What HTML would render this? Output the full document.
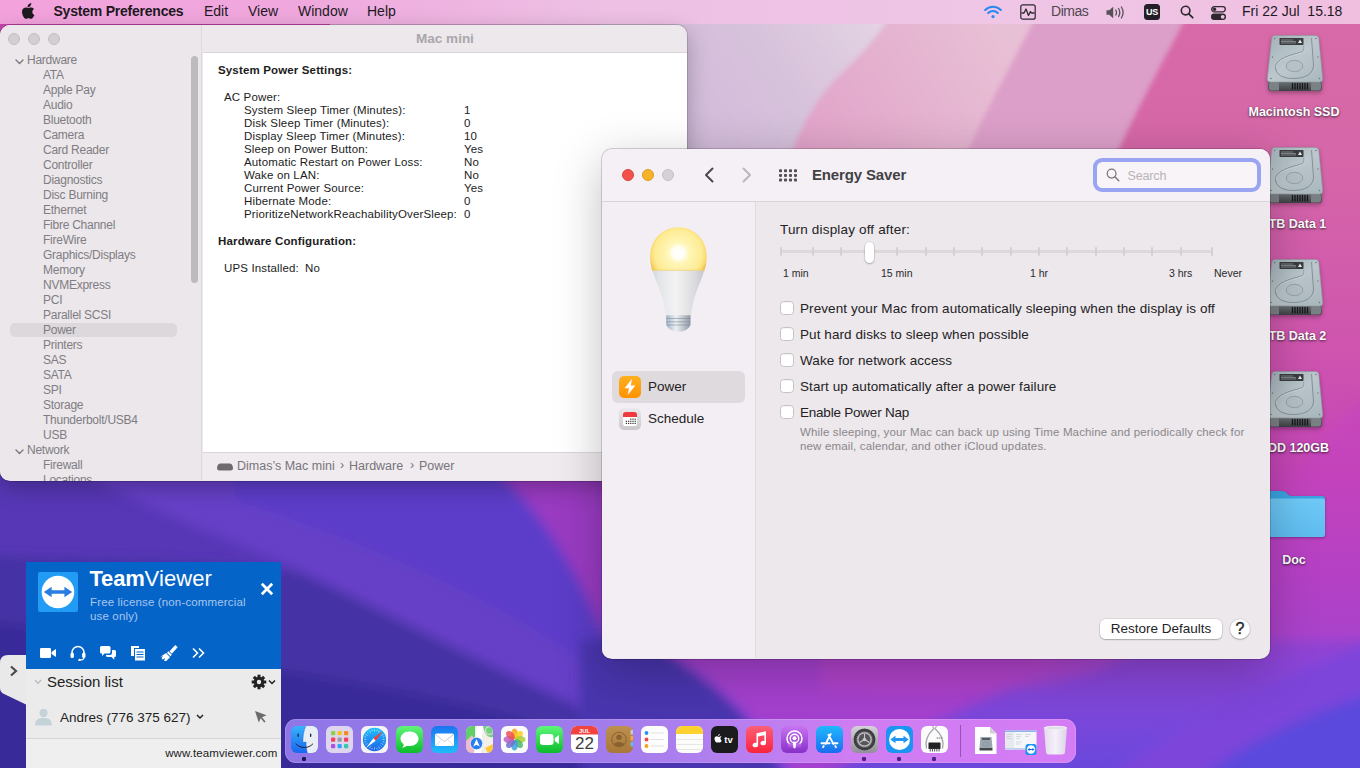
<!DOCTYPE html>
<html><head><meta charset="utf-8"><title>Desktop</title>
<style>
*{box-sizing:border-box;margin:0;padding:0}
html,body{width:1360px;height:768px;overflow:hidden;background:#5a38b8}
body{position:relative;font-family:"Liberation Sans",sans-serif;color:#222;-webkit-font-smoothing:antialiased}
.abs{position:absolute}
#wall{position:absolute;left:0;top:0;width:1360px;height:768px}
/* menubar */
#menubar{position:absolute;left:0;top:0;width:1360px;height:24px;background:linear-gradient(90deg,#f3a2dc 0,#efa8dd 300px,#edc0e4 600px,#efc6e6 1000px,#f0bfe0 1360px);font-size:14px;color:#1d1a1f}
#menubar span{position:absolute;top:3px;white-space:nowrap;line-height:17px}
/* Mac mini window */
#sysinfo{position:absolute;left:0;top:25px;width:687px;height:455.5px;background:#ece8ec;border-radius:10px 10px 10px 10px;overflow:hidden;box-shadow:0 7px 22px rgba(0,0,0,.26),0 0 0 .7px rgba(0,0,0,.2)}
#sysinfo .tl{position:absolute;top:8px;width:12px;height:12px;border-radius:50%;background:#d3cfd3;border:1px solid #c2bec2}
#si-side{position:absolute;left:0;top:0;width:202px;height:455px;background:#ebe7eb;border-right:1px solid #dcd8dc}
#si-side div.it{position:absolute;left:43px;font-size:12px;color:#807d82;white-space:nowrap;line-height:15px;letter-spacing:-.25px;margin-top:1px}
#si-title{position:absolute;left:203px;top:0;width:484px;height:28px;background:#ece8ec;border-bottom:1px solid #d9d5d9;text-align:center;font-weight:bold;font-size:13.5px;color:#a9a6aa;line-height:27px}
#si-content{position:absolute;left:203px;top:28px;width:484px;height:399px;background:#fff}
#si-content div{position:absolute;font-size:11.5px;color:#1c1c1c;white-space:nowrap;line-height:13px;letter-spacing:.15px}
#si-path{position:absolute;left:203px;top:427px;width:484px;height:28px;background:#efebef;border-top:1px solid #dad6da;font-size:12.5px;color:#77747a}
/* Energy saver */
#energy{position:absolute;left:602px;top:149px;width:668px;height:509.5px;background:#ece8ec;border-radius:10px;overflow:hidden;box-shadow:0 12px 48px rgba(0,0,0,.25),0 0 0 .7px rgba(0,0,0,.22)}
#en-bar{position:absolute;left:0;top:0;width:668px;height:53px;background:#f5f0f5;border-bottom:1px solid #d8d4d8}
#en-side{position:absolute;left:0;top:53px;width:154px;height:456px;background:#f3eef3;border-right:1px solid #dedade}
.cb{position:absolute;left:179px;width:14px;height:14px;border-radius:3.5px;background:#fff;border:1px solid #c6c2c6;box-shadow:inset 0 1px 1px rgba(0,0,0,.05);margin-left:-.3px;margin-top:.3px}
.cbl{position:absolute;left:198px;font-size:13.5px;color:#242224;white-space:nowrap;line-height:16px;letter-spacing:.08px;margin-top:.8px}
/* teamviewer */
#tv{position:absolute;left:26px;top:563px;width:255px;height:205px;background:#ebebeb}
#tv::before{content:"";position:absolute;left:0;top:-1px;width:255px;height:1px;background:#0564c8}
#tv-head{position:absolute;left:0;top:0;width:255px;height:106px;background:#0564c8}
/* dock */
#dock{position:absolute;left:284.5px;top:719px;width:791.5px;height:44px;border-radius:11px;background:linear-gradient(90deg,#8f76e6 0,#987aea 30%,#ae7fee 52%,#cf7cf2 72%,#d47cf4 100%);box-shadow:inset 0 0 0 .8px rgba(255,255,255,.2)}
.di{position:absolute;top:6px;width:28px;height:28px;border-radius:7px}
.dlabel{position:absolute;width:140px;text-align:center;color:#fff;font-weight:bold;font-size:12.5px;text-shadow:0 1px 2.5px rgba(0,0,0,.65),0 0 1px rgba(0,0,0,.25);white-space:nowrap;margin-top:1px}
</style></head><body>
<svg id="wall" viewBox="0 0 1360 768">
<defs>
<filter id="b6" x="-10%" y="-10%" width="120%" height="120%"><feGaussianBlur stdDeviation="6"/></filter>
<filter id="b3" x="-10%" y="-10%" width="120%" height="120%"><feGaussianBlur stdDeviation="2.5"/></filter>
<filter id="b20" x="-20%" y="-20%" width="140%" height="140%"><feGaussianBlur stdDeviation="20"/></filter>
<linearGradient id="gR" x1="0" y1="0" x2="0" y2="1">
<stop offset="0" stop-color="#d86aa8"/><stop offset=".2" stop-color="#d667a8"/><stop offset=".45" stop-color="#cf55ae"/><stop offset=".62" stop-color="#c444b8"/><stop offset=".75" stop-color="#a840c8"/><stop offset=".87" stop-color="#8a45d8"/><stop offset="1" stop-color="#6a48dc"/>
</linearGradient>
<linearGradient id="gA" gradientUnits="userSpaceOnUse" x1="700" y1="150" x2="880" y2="30"><stop offset="0" stop-color="#d1bad9"/><stop offset=".55" stop-color="#d8c3dc"/><stop offset="1" stop-color="#e3d2e3"/></linearGradient><linearGradient id="gB" gradientUnits="userSpaceOnUse" x1="800" y1="150" x2="1000" y2="30"><stop offset="0" stop-color="#e1a2c9"/><stop offset=".5" stop-color="#e4b1cf"/><stop offset="1" stop-color="#e8c0d5"/></linearGradient>
</defs>
<!-- base bottom purple -->
<rect width="1360" height="768" fill="#5737b6"/>
<!-- right/top pink field -->
<rect x="600" y="0" width="760" height="768" fill="url(#gR)"/>
<rect x="0" y="0" width="700" height="40" fill="#c845ae"/>
<rect x="330" y="0" width="370" height="40" fill="#d9a6d4"/>
<!-- top bands -->
<g filter="url(#b3)">
<path d="M600,0 H900 C885,30 862,55 840,75 C815,100 800,130 785,170 H600Z" fill="url(#gA)"/>
<path d="M900,0 H1045 C1020,50 990,100 960,170 H785 C800,130 815,100 840,75 C862,55 885,30 900,0Z" fill="url(#gB)"/>
<path d="M1045,0 H1195 C1170,50 1140,100 1110,170 H960 C990,100 1020,50 1045,0Z" fill="#dc9fc9"/>
</g>
<path d="M1380,385 C1330,420 1290,470 1262,560 L1262,640 H1380Z" fill="#c443c2" opacity=".45" filter="url(#b6)"/>
<!-- bottom left shapes -->
<g filter="url(#b6)">
<path d="M75,470 H520 C560,520 600,600 640,700 L640,790 H600 C500,700 400,625 300,571 C230,540 140,505 75,470Z" fill="#6640c7"/>
<path d="M235,470 H520 L640,600 V700 C560,640 450,570 235,500Z" fill="#5c3ec9"/>
<path d="M-20,555 C80,562 200,556 300,573 C360,597 430,640 600,716 L640,736 V790 H-20Z" fill="#4531a4"/>
<path d="M-20,620 C100,640 250,665 400,692 C480,708 560,728 640,762 V790 H-20Z" fill="#392998"/>
<path d="M495,470 C540,510 578,570 606,640 V470Z" fill="#9a3ac2"/>
</g>
<!-- bottom right -->
<g filter="url(#b6)">
<path d="M580,640 H650 C700,680 750,700 790,790 H580Z" fill="#4a35ae"/>
<path d="M650,640 H1100 C1000,700 900,730 800,790 C760,720 720,680 650,640Z" fill="#a43fce"/>
<path d="M820,640 H1150 C1100,685 1000,700 820,690Z" fill="#b845c8" opacity=".6"/>
<path d="M1090,790 C1170,725 1290,675 1380,640 V790Z" fill="#7d45da"/>
<path d="M1185,790 C1240,745 1310,712 1380,692 V790Z" fill="#5a48dc"/>
</g>
</svg>

<!--desk-->
<svg width="0" height="0" style="position:absolute"><defs>
<linearGradient id="hd1" x1="0" y1="0" x2="1" y2="1"><stop offset="0" stop-color="#a3b1b8"/><stop offset=".5" stop-color="#bcc8cd"/><stop offset="1" stop-color="#a9b6bd"/></linearGradient>
<linearGradient id="hd2" x1="0" y1="0" x2="0" y2="1"><stop offset="0" stop-color="#6d7376"/><stop offset="1" stop-color="#3e4144"/></linearGradient>
<symbol id="hdd" viewBox="0 0 58 60">
<path d="M2,47 H56 V53.500 Q56,57 52.500,57 H5.500 Q2,57 2,53.500Z" fill="url(#hd2)"/>
<path d="M3,51 Q3,47.500 7,47.500 H12 Q13,47.500 13,51 V56.500 H5 Q3,56 3,54Z M45,51 Q45,47.500 46,47.500 H51 Q55,47.500 55,51 V54 Q55,56 53,56.500 H45Z" fill="#7b8185"/>
<path d="M26.500,49 V55.500 M29,49 V55.500 M31.500,49 V55.500 M34,49 V55.500 M36.500,49 V55.500 M39,49 V55.500 M41.500,49 V55.500" stroke="#15171a" stroke-width="1.300"/>
<path d="M9,1.500 H49.500 Q52.500,1.500 52.800,4.500 L56.700,44.500 Q57,48 53.500,48 H4.500 Q1,48 1.300,44.500 L5.700,4.500 Q6,1.500 9,1.500Z" fill="url(#hd1)" stroke="#8d999f" stroke-width=".6"/>
<rect x="13.500" y="4" width="24" height="7" rx=".8" fill="#3a3d40"/><path d="M15,6 H27 M15,7.500 H30 M15,9 H30" stroke="#9ea4a8" stroke-width=".7"/><path d="M34,5.500 L36,9 H32Z" fill="#e8eaec"/>
<path d="M38,11.500 V14 C38,17 36,18 32,19 C18,22.500 9.500,27 9.500,33.500 C9.500,40.500 17,44.500 27,44.500 C40,44.500 47.500,39.500 47.500,31 L45.500,4" fill="none" stroke="#869299" stroke-width="1"/>
<path d="M38.800,11.500 V14 C38.800,17.500 37,18.800 33,19.800 C19,23.300 10.300,27.500 10.300,33.500" fill="none" stroke="#d4dde1" stroke-width=".6"/>
<ellipse cx="28.500" cy="32" rx="8.300" ry="5.700" fill="#b5c1c7" stroke="#8b979d" stroke-width=".8"/>
<circle cx="8.500" cy="4.500" r=".8" fill="#6f7a80"/><circle cx="50" cy="4.500" r=".8" fill="#6f7a80"/><circle cx="5" cy="44.500" r=".8" fill="#6f7a80"/><circle cx="53.500" cy="44.500" r=".8" fill="#6f7a80"/><circle cx="6.500" cy="23" r=".7" fill="#6f7a80"/><circle cx="52" cy="23" r=".7" fill="#6f7a80"/>
</symbol></defs></svg>
<svg class="abs" style="left:1265.5px;top:34px;filter:drop-shadow(0 2px 2px rgba(0,0,0,.3))" width="58" height="60"><use href="#hdd"/></svg>
<div class="dlabel" style="left:1224px;top:104px;line-height:15px">Macintosh SSD</div>
<svg class="abs" style="left:1265.5px;top:146px;filter:drop-shadow(0 2px 2px rgba(0,0,0,.3))" width="58" height="60"><use href="#hdd"/></svg>
<div class="dlabel" style="left:1224px;top:216px;line-height:15px">1TB Data 1</div>
<svg class="abs" style="left:1265.5px;top:258px;filter:drop-shadow(0 2px 2px rgba(0,0,0,.3))" width="58" height="60"><use href="#hdd"/></svg>
<div class="dlabel" style="left:1224px;top:328px;line-height:15px">1TB Data 2</div>
<svg class="abs" style="left:1265.5px;top:370px;filter:drop-shadow(0 2px 2px rgba(0,0,0,.3))" width="58" height="60"><use href="#hdd"/></svg>
<div class="dlabel" style="left:1224px;top:440px;line-height:15px">HDD 120GB</div>
<svg class="abs" style="left:1262px;top:488px;filter:drop-shadow(0 1px 1.500px rgba(0,0,0,.3))" width="64" height="52" viewBox="0 0 64 52"><defs><linearGradient id="fd1" x1="0" y1="0" x2="0" y2="1"><stop offset="0" stop-color="#6fc9f7"/><stop offset="1" stop-color="#5fbdf0"/></linearGradient></defs><path d="M1,6 Q1,3 4,3 H20 Q22.500,3 24,4.500 L26,6.500 Q27.500,8 30,8 H60 Q63,8 63,11 V46 Q63,49 60,49 H4 Q1,49 1,46Z" fill="#3aa4e2"/><path d="M1,13 Q1,10.500 3.500,10.500 H60.500 Q63,10.500 63,13 V46 Q63,49 60,49 H4 Q1,49 1,46Z" fill="url(#fd1)"/></svg>
<div class="dlabel" style="left:1224px;top:552px;line-height:15px">Doc</div>
<!--/desk-->
<div id="menubar">
<svg class="abs" style="left:19.500px;top:2.500px" width="15" height="17" viewBox="0 0 15 17"><path d="M10.300,3 C11,2.100 11.400,1 11.300,0 C10.300,.1 9.200,.7 8.500,1.500 C7.900,2.200 7.400,3.300 7.500,4.300 C8.600,4.400 9.600,3.800 10.300,3Z M12.300,8.900 C12.300,6.900 13.900,6 14,5.900 C13.100,4.600 11.700,4.400 11.200,4.400 C10,4.300 8.900,5.100 8.300,5.100 C7.700,5.100 6.800,4.400 5.800,4.400 C4.500,4.400 3.300,5.200 2.600,6.300 C1.300,8.600 2.300,12 3.600,13.900 C4.200,14.800 5,15.800 6,15.800 C7,15.800 7.300,15.200 8.500,15.200 C9.700,15.200 10,15.800 11,15.800 C12,15.800 12.700,14.900 13.300,14 C14,13 14.300,12 14.300,11.900 C14.300,11.900 12.300,11.100 12.300,8.900Z" fill="#1d1a1f"/></svg>
<svg class="abs" style="left:983.500px;top:4.500px" width="18" height="14" viewBox="0 0 18 14"><path d="M1.200,5 A11,11 0 0 1 16.800,5" fill="none" stroke="#2889f2" stroke-width="2.100" stroke-linecap="round"/><path d="M4.200,8 A6.800,6.800 0 0 1 13.800,8" fill="none" stroke="#2889f2" stroke-width="2.100" stroke-linecap="round"/><circle cx="9" cy="11.600" r="1.600" fill="#2889f2"/></svg>
<svg class="abs" style="left:1019.500px;top:3.500px" width="16" height="16" viewBox="0 0 16 16"><rect x=".8" y=".8" width="14.400" height="14.400" rx="2" fill="none" stroke="#2c282e" stroke-width="1.200"/><path d="M1.500,9 H4 L6,5 L8.500,11.500 L10.500,7.500 L11.500,9 H14.500" fill="none" stroke="#2c282e" stroke-width="1.300" stroke-linejoin="round"/></svg>
<svg class="abs" style="left:1105.500px;top:5.500px" width="19" height="13" viewBox="0 0 19 13"><path d="M.5,4.300 H3.200 L7.200,.8 V12.200 L3.200,8.700 H.5Z" fill="#57525a"/><path d="M9.800,4 Q11.200,6.500 9.800,9 M12.600,2.500 Q15,6.500 12.600,10.500 M15.400,1 Q18.800,6.500 15.400,12" fill="none" stroke="#57525a" stroke-width="1.300" stroke-linecap="round"/></svg>
<div class="abs" style="left:1144px;top:4px;width:16px;height:16px;border-radius:3.500px;background:#231f26;color:#fff;font-weight:bold;font-size:9px;line-height:16.500px;text-align:center;letter-spacing:-.2px">US</div>
<svg class="abs" style="left:1179.500px;top:5px;" width="14" height="14" viewBox="0 0 14 14"><circle cx="5.600" cy="5.600" r="4.300" fill="none" stroke="#2c282e" stroke-width="1.600"/><path d="M8.800,8.800 L12.700,12.700" stroke="#2c282e" stroke-width="1.800" stroke-linecap="round"/></svg>
<svg class="abs" style="left:1210.500px;top:5.500px" width="15" height="14" viewBox="0 0 15 14"><rect x=".7" y=".7" width="13.600" height="5.200" rx="2.600" fill="none" stroke="#2c282e" stroke-width="1.300"/><circle cx="3.500" cy="3.300" r="1.700" fill="#2c282e"/><rect x="0" y="7.600" width="15" height="6.400" rx="3.200" fill="#2c282e"/><circle cx="11.700" cy="10.800" r="1.900" fill="#f0c3e3"/></svg>
<span style="left:53.5px;font-weight:bold;font-size:14px;letter-spacing:-.22px">System Preferences</span>
<span style="left:204px">Edit</span>
<span style="left:248px">View</span>
<span style="left:298px">Window</span>
<span style="left:367px">Help</span>
<span style="left:1051px;color:#4f4851;letter-spacing:-.45px">Dimas</span>
<span style="left:1242px">Fri 22 Jul&nbsp; 15.18</span>
</div>

<div id="sysinfo">
 <div id="si-side">
<div class="abs" style="left:10px;top:298px;width:167px;height:14px;border-radius:5px;background:#dcd8dc"></div>
<svg class="abs" style="left:14.500px;top:33.500px" width="9" height="6" viewBox="0 0 9 6"><path d="M1,1 L4.5,4.5 L8,1" fill="none" stroke="#7b787d" stroke-width="1.4" stroke-linecap="round" stroke-linejoin="round"/></svg>
<div class="it" style="left:27px;top:27px">Hardware</div>
<div class="it" style="top:42px">ATA</div>
<div class="it" style="top:57px">Apple Pay</div>
<div class="it" style="top:72px">Audio</div>
<div class="it" style="top:87px">Bluetooth</div>
<div class="it" style="top:102px">Camera</div>
<div class="it" style="top:117px">Card Reader</div>
<div class="it" style="top:132px">Controller</div>
<div class="it" style="top:147px">Diagnostics</div>
<div class="it" style="top:162px">Disc Burning</div>
<div class="it" style="top:177px">Ethernet</div>
<div class="it" style="top:192px">Fibre Channel</div>
<div class="it" style="top:207px">FireWire</div>
<div class="it" style="top:222px">Graphics/Displays</div>
<div class="it" style="top:237px">Memory</div>
<div class="it" style="top:252px">NVMExpress</div>
<div class="it" style="top:267px">PCI</div>
<div class="it" style="top:282px">Parallel SCSI</div>
<div class="it" style="top:297px">Power</div>
<div class="it" style="top:312px">Printers</div>
<div class="it" style="top:327px">SAS</div>
<div class="it" style="top:342px">SATA</div>
<div class="it" style="top:357px">SPI</div>
<div class="it" style="top:372px">Storage</div>
<div class="it" style="top:387px">Thunderbolt/USB4</div>
<div class="it" style="top:402px">USB</div>
<svg class="abs" style="left:14.500px;top:423.500px" width="9" height="6" viewBox="0 0 9 6"><path d="M1,1 L4.5,4.5 L8,1" fill="none" stroke="#7b787d" stroke-width="1.4" stroke-linecap="round" stroke-linejoin="round"/></svg>
<div class="it" style="left:27px;top:417px">Network</div>
<div class="it" style="top:432px">Firewall</div>
<div class="it" style="top:447px">Locations</div>
<div class="abs" style="left:191px;top:31px;width:7px;height:227px;border-radius:4px;background:#bebbbe"></div>
</div>
 <div class="tl" style="left:8px"></div><div class="tl" style="left:28px"></div><div class="tl" style="left:48px"></div>
 <div id="si-title">Mac mini</div>
 <div id="si-content">
<div style="left:15px;top:10.5px;font-weight:bold">System Power Settings:</div>
<div style="left:21px;top:37.5px">AC Power:</div>
<div style="left:41px;top:50.5px">System Sleep Timer (Minutes):</div>
<div style="left:261px;top:50.5px">1</div>
<div style="left:41px;top:63.5px">Disk Sleep Timer (Minutes):</div>
<div style="left:261px;top:63.5px">0</div>
<div style="left:41px;top:76.5px">Display Sleep Timer (Minutes):</div>
<div style="left:261px;top:76.5px">10</div>
<div style="left:41px;top:89.5px">Sleep on Power Button:</div>
<div style="left:261px;top:89.5px">Yes</div>
<div style="left:41px;top:102.5px">Automatic Restart on Power Loss:</div>
<div style="left:261px;top:102.5px">No</div>
<div style="left:41px;top:115.5px">Wake on LAN:</div>
<div style="left:261px;top:115.5px">No</div>
<div style="left:41px;top:128.5px">Current Power Source:</div>
<div style="left:261px;top:128.5px">Yes</div>
<div style="left:41px;top:141.5px">Hibernate Mode:</div>
<div style="left:261px;top:141.5px">0</div>
<div style="left:41px;top:154.5px">PrioritizeNetworkReachabilityOverSleep:</div>
<div style="left:261px;top:154.5px">0</div>
<div style="left:15px;top:181.5px;font-weight:bold">Hardware Configuration:</div>
<div style="left:21px;top:208.5px">UPS Installed:</div>
<div style="left:102px;top:208.5px">No</div>
</div>
 <div id="si-path">
<svg class="abs" style="left:14px;top:9.500px" width="16" height="8" viewBox="0 0 16 8"><path d="M3,.5 H13 Q15,.5 15.600,3 L16,5 Q16,7.500 13.500,7.500 H2.500 Q0,7.500 0,5 L.4,3 Q1,.5 3,.5Z" fill="#6d6a70"/></svg>
<span class="abs" style="left:34px;top:5.500px;white-space:nowrap;line-height:15px">Dimas’s Mac mini</span><span class="abs" style="left:137px;top:5px;line-height:15px">›</span><span class="abs" style="left:146px;top:5.500px;white-space:nowrap;line-height:15px">Hardware</span><span class="abs" style="left:207px;top:5px;line-height:15px">›</span><span class="abs" style="left:216px;top:5.500px;white-space:nowrap;line-height:15px">Power</span>
</div>
</div>

<div id="energy">
 <div id="en-bar">
<div class="abs" style="left:20px;top:20px;width:12px;height:12px;border-radius:50%;background:#f4514b;border:.5px solid #dd423d"></div>
<div class="abs" style="left:40px;top:20px;width:12px;height:12px;border-radius:50%;background:#f5b32b;border:.5px solid #dc9d1f"></div>
<div class="abs" style="left:60px;top:20px;width:12px;height:12px;border-radius:50%;background:#d5d1d5;border:.5px solid #c3bfc3"></div>
<svg class="abs" style="left:101px;top:17px" width="12" height="18" viewBox="0 0 12 18"><path d="M9.5,2.5 L3,9 L9.5,15.5" fill="none" stroke="#48464a" stroke-width="1.9" stroke-linecap="round" stroke-linejoin="round"/></svg>
<svg class="abs" style="left:139px;top:17px" width="12" height="18" viewBox="0 0 12 18"><path d="M2.5,2.5 L9,9 L2.5,15.5" fill="none" stroke="#b9b6ba" stroke-width="1.9" stroke-linecap="round" stroke-linejoin="round"/></svg>
<svg class="abs" style="left:177px;top:20px" width="18" height="13" viewBox="0 0 18 12.4"><rect x="0" y="0.0" width="3" height="3" rx=".8" fill="#535155"/><rect x="5" y="0.0" width="3" height="3" rx=".8" fill="#535155"/><rect x="10" y="0.0" width="3" height="3" rx=".8" fill="#535155"/><rect x="15" y="0.0" width="3" height="3" rx=".8" fill="#535155"/><rect x="0" y="4.6" width="3" height="3" rx=".8" fill="#535155"/><rect x="5" y="4.6" width="3" height="3" rx=".8" fill="#535155"/><rect x="10" y="4.6" width="3" height="3" rx=".8" fill="#535155"/><rect x="15" y="4.6" width="3" height="3" rx=".8" fill="#535155"/><rect x="0" y="9.2" width="3" height="3" rx=".8" fill="#535155"/><rect x="5" y="9.2" width="3" height="3" rx=".8" fill="#535155"/><rect x="10" y="9.2" width="3" height="3" rx=".8" fill="#535155"/><rect x="15" y="9.2" width="3" height="3" rx=".8" fill="#535155"/></svg>
<div class="abs" style="left:210px;top:17px;font-weight:bold;font-size:15px;color:#434144;line-height:18px;white-space:nowrap;letter-spacing:-.15px">Energy Saver</div>
<div class="abs" style="left:491.3px;top:8.8px;width:167.800px;height:33.900px;border-radius:9px;background:#9aa5f2"></div>
<div class="abs" style="left:495px;top:12.6px;width:160.400px;height:26.600px;border-radius:5.500px;background:#f8f4f8"></div>
<svg class="abs" style="left:504.4px;top:18.8px" width="14" height="14" viewBox="0 0 14 14"><circle cx="5.600" cy="5.600" r="4.400" fill="none" stroke="#77747a" stroke-width="1.250"/><path d="M8.800,8.800 L12.800,12.800" stroke="#77747a" stroke-width="1.400" stroke-linecap="round"/></svg>
<div class="abs" style="left:525.5px;top:19px;font-size:12.500px;color:#b7b3b8;line-height:16px;letter-spacing:-.15px">Search</div>
</div>
 <div id="en-side">
<div class="abs" style="left:10px;top:169px;width:133px;height:32px;border-radius:6px;background:#dedade"></div>
<div class="abs" style="left:17px;top:174px;width:22px;height:22px;border-radius:5px;background:linear-gradient(#ffb01f,#ff9203)"><svg width="22" height="22" viewBox="0 0 22 22"><path d="M13,2.800 L5.600,12.300 H10 L8.600,19.200 L16.400,9.400 H11.800Z" fill="#fff"/></svg></div>
<div class="abs" style="left:46px;top:177px;font-size:13.5px;color:#242224;line-height:16px">Power</div>
<div class="abs" style="left:17px;top:206px;width:22px;height:22px;border-radius:5px;background:linear-gradient(#ebe9eb,#c9c7ca)"><svg width="22" height="22" viewBox="0 0 22 22"><rect x="4" y="4" width="14" height="14" rx="2.6" fill="#fff"/><path d="M4,9 V6.6 Q4,4 6.6,4 H15.4 Q18,4 18,6.6 V9Z" fill="#f0383f"/><g fill="#333"><rect x="11.2" y="10.6" width="1.2" height="1.2"/><rect x="13.4" y="10.6" width="1.2" height="1.2"/><rect x="15.600000000000001" y="10.6" width="1.2" height="1.2"/><rect x="9.0" y="12.7" width="1.2" height="1.2"/><rect x="11.2" y="12.7" width="1.2" height="1.2"/><rect x="13.4" y="12.7" width="1.2" height="1.2"/><rect x="15.600000000000001" y="12.7" width="1.2" height="1.2"/><rect x="9.0" y="14.8" width="1.2" height="1.2"/><rect x="11.2" y="14.8" width="1.2" height="1.2"/><rect x="13.4" y="14.8" width="1.2" height="1.2"/><rect x="15.600000000000001" y="14.8" width="1.2" height="1.2"/><rect x="6.8" y="12.7" width="1.2" height="1.2"/><rect x="6.8" y="14.8" width="1.2" height="1.2"/></g></svg></div>
<div class="abs" style="left:46px;top:209px;font-size:13.5px;color:#242224;line-height:16px">Schedule</div>
<svg class="abs" style="left:43px;top:21px" width="66" height="114" viewBox="0 0 66 114">
<defs><radialGradient id="bg1" cx="33.400" cy="30" r="29.500" gradientUnits="userSpaceOnUse"><stop offset="0" stop-color="#fff"/><stop offset=".2" stop-color="#fffef4"/><stop offset=".36" stop-color="#fff6b8"/><stop offset=".8" stop-color="#fdec94"/><stop offset=".95" stop-color="#f9d96c"/><stop offset="1" stop-color="#f0c355"/></radialGradient>
<linearGradient id="bg2" x1="0" y1="0" x2="1" y2="0"><stop offset="0" stop-color="#c9d9e6"/><stop offset=".12" stop-color="#e2e4e7"/><stop offset=".45" stop-color="#f3f3f4"/><stop offset=".8" stop-color="#dcdcde"/><stop offset="1" stop-color="#c3c8ce"/></linearGradient>
<linearGradient id="bg3" x1="0" y1="0" x2="1" y2="0"><stop offset="0" stop-color="#9fb4c6"/><stop offset=".4" stop-color="#eef1f4"/><stop offset="1" stop-color="#8e99a4"/></linearGradient></defs>
<path d="M7.600,48.500 C6,44 5.100,38 5.100,32.500 A28.300,28.300 0 0 1 61.700,32.500 C61.700,38 60.800,44 59.200,48.500Z" fill="url(#bg1)"/>
<path d="M7.600,47.300 H59.200 C57,56 52,66 49,76 C47.500,82 46.500,88 46.100,92.500 H20.600 C20.200,88 19.200,82 17.700,76 C14.700,66 9.800,56 7.600,47.300Z" fill="url(#bg2)"/>
<path d="M7.600,47.300 H59.200" stroke="#f3d27a" stroke-width=".8"/>
<path d="M21.200,92.300 H45.500 V102 C43.500,106 40,108.600 33.400,108.600 C27,108.600 23.200,106 21.200,102Z" fill="url(#bg3)"/>
<path d="M21.200,95.500 H45.500 M21.200,98.800 H45.500 M22,102 H44.800" stroke="#7d8b99" stroke-width=".9" opacity=".65"/>
</svg>
</div>
<!--en-main-->
<div class="abs" style="left:178px;top:73px;font-size:13.5px;color:#242224;line-height:16px;white-space:nowrap;letter-spacing:.17px">Turn display off after:</div>
<div class="abs" style="left:179px;top:101px;width:431px;height:3px;border-radius:1.5px;background:#dcd8dc"></div>
<div class="abs" style="left:178px;top:98px;width:2px;height:9px;border-radius:1px;background:#d4d0d4"></div>
<div class="abs" style="left:209.5px;top:98px;width:2px;height:9px;border-radius:1px;background:#d4d0d4"></div>
<div class="abs" style="left:238px;top:98px;width:2px;height:9px;border-radius:1px;background:#d4d0d4"></div>
<div class="abs" style="left:265.5px;top:98px;width:2px;height:9px;border-radius:1px;background:#d4d0d4"></div>
<div class="abs" style="left:294px;top:98px;width:2px;height:9px;border-radius:1px;background:#d4d0d4"></div>
<div class="abs" style="left:322.5px;top:98px;width:2px;height:9px;border-radius:1px;background:#d4d0d4"></div>
<div class="abs" style="left:351px;top:98px;width:2px;height:9px;border-radius:1px;background:#d4d0d4"></div>
<div class="abs" style="left:379px;top:98px;width:2px;height:9px;border-radius:1px;background:#d4d0d4"></div>
<div class="abs" style="left:407.5px;top:98px;width:2px;height:9px;border-radius:1px;background:#d4d0d4"></div>
<div class="abs" style="left:436px;top:98px;width:2px;height:9px;border-radius:1px;background:#d4d0d4"></div>
<div class="abs" style="left:464px;top:98px;width:2px;height:9px;border-radius:1px;background:#d4d0d4"></div>
<div class="abs" style="left:492.5px;top:98px;width:2px;height:9px;border-radius:1px;background:#d4d0d4"></div>
<div class="abs" style="left:521px;top:98px;width:2px;height:9px;border-radius:1px;background:#d4d0d4"></div>
<div class="abs" style="left:549px;top:98px;width:2px;height:9px;border-radius:1px;background:#d4d0d4"></div>
<div class="abs" style="left:577.5px;top:98px;width:2px;height:9px;border-radius:1px;background:#d4d0d4"></div>
<div class="abs" style="left:609px;top:98px;width:2px;height:9px;border-radius:1px;background:#d4d0d4"></div>
<div class="abs" style="left:262.5px;top:93px;width:9px;height:21px;border-radius:4.5px;background:#fff;box-shadow:0 0 0 .5px rgba(0,0,0,.12),0 1px 2px rgba(0,0,0,.25)"></div>
<div class="abs" style="left:181px;top:118px;font-size:10.5px;color:#2a282a;line-height:12px;white-space:nowrap">1 min</div>
<div class="abs" style="left:279px;top:118px;font-size:10.5px;color:#2a282a;line-height:12px;white-space:nowrap">15 min</div>
<div class="abs" style="left:428px;top:118px;font-size:10.5px;color:#2a282a;line-height:12px;white-space:nowrap">1 hr</div>
<div class="abs" style="left:567px;top:118px;font-size:10.5px;color:#2a282a;line-height:12px;white-space:nowrap">3 hrs</div>
<div class="abs" style="left:612px;top:118px;font-size:10.5px;color:#2a282a;line-height:12px;white-space:nowrap">Never</div>
<div class="cb" style="left:178.5px;top:151.5px"></div>
<div class="cbl" style="left:198px;top:151px">Prevent your Mac from automatically sleeping when the display is off</div>
<div class="cb" style="left:178.5px;top:177.5px"></div>
<div class="cbl" style="left:198px;top:177px">Put hard disks to sleep when possible</div>
<div class="cb" style="left:178.5px;top:203.5px"></div>
<div class="cbl" style="left:198px;top:203px">Wake for network access</div>
<div class="cb" style="left:178.5px;top:229.5px"></div>
<div class="cbl" style="left:198px;top:229px">Start up automatically after a power failure</div>
<div class="cb" style="left:178.5px;top:255.5px"></div>
<div class="cbl" style="left:198px;top:255px;letter-spacing:-.22px">Enable Power Nap</div>
<div class="abs" style="left:198px;top:276px;font-size:11.5px;color:#8a878b;line-height:14px;white-space:nowrap;letter-spacing:.15px">While sleeping, your Mac can back up using Time Machine and periodically check for<br>new email, calendar, and other iCloud updates.</div>
<div class="abs" style="left:498px;top:470px;width:122px;height:20px;border-radius:5.5px;background:#fff;box-shadow:0 0 0 .5px rgba(0,0,0,.14),0 1px 1.5px rgba(0,0,0,.22);text-align:center;font-size:13.5px;line-height:19.5px;color:#242224">Restore Defaults</div>
<div class="abs" style="left:628px;top:470px;width:20px;height:20px;border-radius:50%;background:#fff;box-shadow:0 0 0 .5px rgba(0,0,0,.14),0 1px 1.5px rgba(0,0,0,.22);text-align:center;font-size:16px;line-height:20.5px;color:#2c2a2c;-webkit-text-stroke:.45px #2c2a2c">?</div>
<!--/en-main-->
</div>

<div id="tv">
<div id="tv-head">
<div class="abs" style="left:12px;top:9px;width:40px;height:40px;border-radius:2px;background:#229bf5"><svg width="40" height="40" viewBox="0 0 40 40"><circle cx="20" cy="20" r="16.3" fill="#fff"/><path d="M5.8,20 L13.6,14.800 V18.200 H26.400 V14.800 L34.200,20 L26.400,25.200 V21.800 H13.600 V25.200Z" fill="#2a7ce0"/></svg></div>
<div class="abs" style="left:63.5px;top:3px;font-size:22px;line-height:26px;color:#fff;white-space:nowrap;letter-spacing:-.2px"><b>Team</b><span style="letter-spacing:.1px">Viewer</span></div>
<div class="abs" style="left:64px;top:32px;font-size:11.500px;line-height:14px;color:#a8c6ee;white-space:nowrap;letter-spacing:.15px">Free license (non-commercial<br>use only)</div>
<svg class="abs" style="left:234px;top:18.500px" width="14" height="14" viewBox="0 0 14 14"><path d="M1.800,1.800 L12.200,12.200 M12.200,1.800 L1.800,12.200" stroke="#fff" stroke-width="2.700" stroke-linecap="butt"/></svg>
<svg class="abs" style="left:12.5px;top:81.5px" width="18" height="16" viewBox="0 0 18 16"><rect x="1" y="3" width="11" height="10" rx="1.200" fill="#fff"/><path d="M12.500,7 L17,4 V12 L12.500,9Z" fill="#fff"/></svg>
<svg class="abs" style="left:42.5px;top:81.5px" width="18" height="16" viewBox="0 0 18 16"><path d="M3,9 V7.500 A6,6 0 0 1 15,7.500 V9" fill="none" stroke="#fff" stroke-width="1.500"/><rect x="1.500" y="7.500" width="3.400" height="5.500" rx="1.500" fill="#fff"/><rect x="13.100" y="7.500" width="3.400" height="5.500" rx="1.500" fill="#fff"/><path d="M15,12.500 Q15,15 11,15" fill="none" stroke="#fff" stroke-width="1.200"/><circle cx="10.500" cy="15" r="1.200" fill="#fff"/></svg>
<svg class="abs" style="left:73.0px;top:81.5px" width="18" height="16" viewBox="0 0 18 16"><path d="M1,2.500 Q1,1 2.500,1 H10 Q11.500,1 11.500,2.500 V7 Q11.500,8.500 10,8.500 H5.500 L3,11 V8.500 H2.500 Q1,8.500 1,7Z" fill="#fff"/><path d="M13,5 H15.500 Q17,5 17,6.500 V10.500 Q17,12 15.500,12 H15.300 V14.800 L12.500,12 H8.500 Q7,12 7,10.500 V10 H11 Q13,10 13,8Z" fill="#fff"/></svg>
<svg class="abs" style="left:103.0px;top:81.5px" width="18" height="16" viewBox="0 0 18 16"><path d="M2,1 H10 V3 H5 V11 H2Z" fill="#fff"/><rect x="6" y="4" width="10" height="11.500" fill="#fff"/><path d="M7.500,7 H14.500 M7.500,9.500 H14.500 M7.500,12 H14.500" stroke="#0564c8" stroke-width="1.100"/></svg>
<svg class="abs" style="left:133.5px;top:81.5px" width="18" height="16" viewBox="0 0 18 16"><g transform="translate(-1.500,-1.200) scale(1.160)"><path d="M14.500,1 L16.500,3 L11.500,8.500 L9.500,6.500Z" fill="#fff"/><path d="M8.500,6.500 L11.500,9.500 L10.300,10.700 L7.300,7.700Z" fill="#fff"/><path d="M6.500,8 L10,11.500 L6,15.500 L4.800,14.300 L5.800,12.300 L3.600,13.500 L2.600,12.300 L4,10.500 L1.500,11.300Z" fill="#fff"/></g></svg>
<svg class="abs" style="left:163.0px;top:81.5px" width="18" height="16" viewBox="0 0 18 16"><path d="M4,3.500 L8.500,8 L4,12.500 M10,3.500 L14.500,8 L10,12.500" fill="none" stroke="#fff" stroke-width="1.600"/></svg>
</div>
<svg class="abs" style="left:-26px;top:92px" width="26" height="52" viewBox="0 0 26 52"><path d="M0,8 Q0,0 8,0 H27 V50 L4,39 Q0,37 0,33Z" fill="#e9e9e9"/><path d="M11,11.500 L16,16 L11,20.500" fill="none" stroke="#4a4a4a" stroke-width="2.200"/></svg>
<svg class="abs" style="left:8px;top:115.5px" width="8" height="6" viewBox="0 0 8 6"><path d="M1,1 L4,4.300 L7,1" fill="none" stroke="#b8b8b8" stroke-width="1.200"/></svg>
<div class="abs" style="left:21px;top:109px;font-size:15px;line-height:19px;color:#222;white-space:nowrap">Session list</div>
<svg class="abs" style="left:225px;top:110.5px" width="26" height="16" viewBox="0 0 26 16"><g transform="translate(8,8)" fill="#222"><rect x="-1.500" y="-7.300" width="3" height="4" transform="rotate(0)"/><rect x="-1.500" y="-7.300" width="3" height="4" transform="rotate(45)"/><rect x="-1.500" y="-7.300" width="3" height="4" transform="rotate(90)"/><rect x="-1.500" y="-7.300" width="3" height="4" transform="rotate(135)"/><rect x="-1.500" y="-7.300" width="3" height="4" transform="rotate(180)"/><rect x="-1.500" y="-7.300" width="3" height="4" transform="rotate(225)"/><rect x="-1.500" y="-7.300" width="3" height="4" transform="rotate(270)"/><rect x="-1.500" y="-7.300" width="3" height="4" transform="rotate(315)"/><circle r="5.200"/><circle r="2.200" fill="#ebebeb"/></g><path d="M18,6.500 L21,9.500 L24,6.500" fill="none" stroke="#222" stroke-width="1.500"/></svg>
<svg class="abs" style="left:8.5px;top:145px" width="17" height="18" viewBox="0 0 17 18"><circle cx="8.500" cy="5" r="4.200" fill="#c4d3d7"/><path d="M0,17.500 Q0,10.500 6,10 H11 Q17,10.500 17,17.500Z" fill="#c4d3d7"/></svg>
<div class="abs" style="left:34px;top:147px;font-size:13.500px;line-height:16px;color:#222;white-space:nowrap">Andres (776 375 627)</div>
<svg class="abs" style="left:169.5px;top:151px" width="8" height="6" viewBox="0 0 8 6"><path d="M1,1 L4,4 L7,1" fill="none" stroke="#222" stroke-width="1.500"/></svg>
<svg class="abs" style="left:228px;top:147px" width="14" height="14" viewBox="0 0 14 14"><path d="M1,1 L12.500,5.300 L8,7.200 L11.500,11.500 L10.200,12.600 L6.700,8.200 L4.800,12.500Z" fill="#6b6b6b"/></svg>
<div class="abs" style="left:0;top:175px;width:255px;height:30px;background:#efefef;border-top:1px solid #d4d4d4"></div>
<div class="abs" style="left:0;top:183px;width:251.500px;text-align:right;font-size:11.500px;line-height:14px;color:#222;white-space:nowrap;letter-spacing:.1px">www.teamviewer.com</div>
</div>
<div id="dock"><div class="abs" style="left:-.5px;top:0">
<svg class="abs" style="left:7.2px;top:7px" width="27" height="27" viewBox="0 0 54 54"><defs><linearGradient id="gf" x1="0" y1="0" x2="0" y2="1"><stop offset="0" stop-color="#35b3fb"/><stop offset="1" stop-color="#1a66ee"/></linearGradient></defs><clipPath id="fc"><rect width="54" height="54" rx="12"/></clipPath><g clip-path="url(#fc)"><rect width="54" height="54" fill="url(#gf)"/><path d="M30,0 H54 V54 H33 C31,46 30,40 30.500,32 H24 C24,20 26,8 30,0Z" fill="#e9eef6"/><path d="M30,0 C26,8 24,20 24,32 H30.500 C30,40 31,46 33,54" fill="none" stroke="#1d3f8f" stroke-width="1" opacity=".35"/><path d="M14.200,16.500 V20.500 M39.300,16.500 V20.500" stroke="#1b1f33" stroke-width="2.600" stroke-linecap="round"/><path d="M10,36 C19,45.500 35,45.500 43.500,36" fill="none" stroke="#1b1f33" stroke-width="1.900" stroke-linecap="round"/></g></svg>
<svg class="abs" style="left:42.2px;top:7px" width="27" height="27" viewBox="0 0 54 54"><rect x="0" y="0" width="54" height="54" rx="12" fill="#ddd6ee" /><rect x="10" y="10" width="8.500" height="8.500" rx="2.200" fill="#8bd346"/><rect x="23" y="10" width="8.500" height="8.500" rx="2.200" fill="#f9c11c"/><rect x="36" y="10" width="8.500" height="8.500" rx="2.200" fill="#f98a1c"/><rect x="10" y="23" width="8.500" height="8.500" rx="2.200" fill="#f5405a"/><rect x="23" y="23" width="8.500" height="8.500" rx="2.200" fill="#9a9aa0"/><rect x="36" y="23" width="8.500" height="8.500" rx="2.200" fill="#f5405a"/><rect x="10" y="36" width="8.500" height="8.500" rx="2.200" fill="#b04fe0"/><rect x="23" y="36" width="8.500" height="8.500" rx="2.200" fill="#2aa7f5"/><rect x="36" y="36" width="8.500" height="8.500" rx="2.200" fill="#36c9b0"/></svg>
<svg class="abs" style="left:77.2px;top:7px" width="27" height="27" viewBox="0 0 54 54"><defs><linearGradient id="gs" x1="0" y1="0" x2="0" y2="1"><stop offset="0" stop-color="#1fc1fb"/><stop offset="1" stop-color="#1c62e8"/></linearGradient></defs><rect x="0" y="0" width="54" height="54" rx="12" fill="#f4f4f6" /><circle cx="27" cy="27" r="23.300" fill="url(#gs)"/><path d="M27,6.500 V11" stroke="#fff" stroke-width="1" transform="rotate(0 27 27)"/><path d="M27,6.500 V9.5" stroke="#fff" stroke-width="1" transform="rotate(15 27 27)"/><path d="M27,6.500 V11" stroke="#fff" stroke-width="1" transform="rotate(30 27 27)"/><path d="M27,6.500 V9.5" stroke="#fff" stroke-width="1" transform="rotate(45 27 27)"/><path d="M27,6.500 V11" stroke="#fff" stroke-width="1" transform="rotate(60 27 27)"/><path d="M27,6.500 V9.5" stroke="#fff" stroke-width="1" transform="rotate(75 27 27)"/><path d="M27,6.500 V11" stroke="#fff" stroke-width="1" transform="rotate(90 27 27)"/><path d="M27,6.500 V9.5" stroke="#fff" stroke-width="1" transform="rotate(105 27 27)"/><path d="M27,6.500 V11" stroke="#fff" stroke-width="1" transform="rotate(120 27 27)"/><path d="M27,6.500 V9.5" stroke="#fff" stroke-width="1" transform="rotate(135 27 27)"/><path d="M27,6.500 V11" stroke="#fff" stroke-width="1" transform="rotate(150 27 27)"/><path d="M27,6.500 V9.5" stroke="#fff" stroke-width="1" transform="rotate(165 27 27)"/><path d="M27,6.500 V11" stroke="#fff" stroke-width="1" transform="rotate(180 27 27)"/><path d="M27,6.500 V9.5" stroke="#fff" stroke-width="1" transform="rotate(195 27 27)"/><path d="M27,6.500 V11" stroke="#fff" stroke-width="1" transform="rotate(210 27 27)"/><path d="M27,6.500 V9.5" stroke="#fff" stroke-width="1" transform="rotate(225 27 27)"/><path d="M27,6.500 V11" stroke="#fff" stroke-width="1" transform="rotate(240 27 27)"/><path d="M27,6.500 V9.5" stroke="#fff" stroke-width="1" transform="rotate(255 27 27)"/><path d="M27,6.500 V11" stroke="#fff" stroke-width="1" transform="rotate(270 27 27)"/><path d="M27,6.500 V9.5" stroke="#fff" stroke-width="1" transform="rotate(285 27 27)"/><path d="M27,6.500 V11" stroke="#fff" stroke-width="1" transform="rotate(300 27 27)"/><path d="M27,6.500 V9.5" stroke="#fff" stroke-width="1" transform="rotate(315 27 27)"/><path d="M27,6.500 V11" stroke="#fff" stroke-width="1" transform="rotate(330 27 27)"/><path d="M27,6.500 V9.5" stroke="#fff" stroke-width="1" transform="rotate(345 27 27)"/><path d="M44,10 L29.300,29.300 L24.700,24.700Z" fill="#ff3b30"/><path d="M10,44 L24.700,24.700 L29.300,29.300Z" fill="#fff"/></svg>
<svg class="abs" style="left:112.2px;top:7px" width="27" height="27" viewBox="0 0 54 54"><defs><linearGradient id="gm" x1="0" y1="0" x2="0" y2="1"><stop offset="0" stop-color="#62f57a"/><stop offset="1" stop-color="#0bbd2c"/></linearGradient></defs><rect x="0" y="0" width="54" height="54" rx="12" fill="url(#gm)" /><path d="M27,11 C38,11 45,17.500 45,25.500 C45,33.500 38,40 27,40 C25,40 23,39.800 21.300,39.300 C19,41.500 15.500,43 12.500,43 C14.500,41 15.500,38.500 15.300,36.300 C11.500,33.800 9,30 9,25.500 C9,17.500 16,11 27,11Z" fill="#fff"/></svg>
<svg class="abs" style="left:147.2px;top:7px" width="27" height="27" viewBox="0 0 54 54"><defs><linearGradient id="gml" x1="0" y1="0" x2="0" y2="1"><stop offset="0" stop-color="#1b74ef"/><stop offset="1" stop-color="#1fbdfb"/></linearGradient></defs><rect x="0" y="0" width="54" height="54" rx="12" fill="url(#gml)" /><rect x="8" y="15" width="38" height="25" rx="3.500" fill="#fff"/><path d="M9,17 L27,31 L45,17" fill="none" stroke="#b9c4d6" stroke-width="1.800"/><path d="M9,39 L21,27 M45,39 L33,27" stroke="#d0d8e6" stroke-width="1.500"/></svg>
<svg class="abs" style="left:182.2px;top:7px" width="27" height="27" viewBox="0 0 54 54"><clipPath id="mc"><rect width="54" height="54" rx="12"/></clipPath><g clip-path="url(#mc)"><rect width="54" height="54" fill="#f2efe9"/><path d="M0,0 H18 V54 H0Z" fill="#5fd068"/><path d="M0,30 L12,18 L30,54 H0Z" fill="#f0b9cc"/><path d="M22,0 H34 L30,54 H16Z" fill="#fff"/><path d="M34,0 H54 V22 C46,24 38,20 34,0Z" fill="#6fd37a"/><circle cx="47" cy="9" r="8" fill="none" stroke="#d6d6d6" stroke-width="3"/><path d="M38,44 L54,36 V54 H44Z" fill="#fdc93b"/><circle cx="21" cy="35" r="12.500" fill="#2b7cf0" stroke="#fff" stroke-width="1.500"/><path d="M21,26 L27.500,41 L21,37.500 L14.500,41Z" fill="#fff"/></g></svg>
<svg class="abs" style="left:217.2px;top:7px" width="27" height="27" viewBox="0 0 54 54"><rect x="0" y="0" width="54" height="54" rx="12" fill="#fbfbfb" /><ellipse cx="27" cy="15.500" rx="6.800" ry="10.500" fill="#f9a11b" opacity=".85" transform="rotate(0 27 27)"/><ellipse cx="27" cy="15.500" rx="6.800" ry="10.500" fill="#f4d021" opacity=".85" transform="rotate(45 27 27)"/><ellipse cx="27" cy="15.500" rx="6.800" ry="10.500" fill="#a8cf38" opacity=".85" transform="rotate(90 27 27)"/><ellipse cx="27" cy="15.500" rx="6.800" ry="10.500" fill="#49b86c" opacity=".85" transform="rotate(135 27 27)"/><ellipse cx="27" cy="15.500" rx="6.800" ry="10.500" fill="#3ba3d8" opacity=".85" transform="rotate(180 27 27)"/><ellipse cx="27" cy="15.500" rx="6.800" ry="10.500" fill="#6f6fd0" opacity=".85" transform="rotate(225 27 27)"/><ellipse cx="27" cy="15.500" rx="6.800" ry="10.500" fill="#b660c5" opacity=".85" transform="rotate(270 27 27)"/><ellipse cx="27" cy="15.500" rx="6.800" ry="10.500" fill="#ee5053" opacity=".85" transform="rotate(315 27 27)"/></svg>
<svg class="abs" style="left:252.2px;top:7px" width="27" height="27" viewBox="0 0 54 54"><defs><linearGradient id="gft" x1="0" y1="0" x2="0" y2="1"><stop offset="0" stop-color="#5df777"/><stop offset="1" stop-color="#0abb2b"/></linearGradient></defs><rect x="0" y="0" width="54" height="54" rx="12" fill="url(#gft)" /><rect x="8" y="16" width="27" height="22" rx="5.500" fill="#fff"/><path d="M37.500,24 L46,18 V36 L37.500,30Z" fill="#fff"/></svg>
<svg class="abs" style="left:287.2px;top:7px" width="27" height="27" viewBox="0 0 54 54"><clipPath id="cc"><rect width="54" height="54" rx="12"/></clipPath><g clip-path="url(#cc)"><rect width="54" height="54" fill="#fff"/><rect width="54" height="17" fill="#f2443f"/></g><text x="27" y="13.500" text-anchor="middle" font-family="Liberation Sans,sans-serif" font-size="11.500" font-weight="bold" fill="#fff">JUL</text><text x="27" y="46.500" text-anchor="middle" font-family="Liberation Sans,sans-serif" font-size="34" fill="#3c3c3e">22</text></svg>
<svg class="abs" style="left:322.2px;top:7px" width="27" height="27" viewBox="0 0 54 54"><defs><linearGradient id="gct" x1="0" y1="0" x2="0" y2="1"><stop offset="0" stop-color="#bd9050"/><stop offset="1" stop-color="#a87838"/></linearGradient></defs><rect x="0" y="0" width="54" height="54" rx="12" fill="url(#gct)" /><rect x="49" y="8" width="5" height="9" fill="#c9c9c9"/><rect x="49" y="20" width="5" height="9" fill="#f2a93b"/><rect x="49" y="32" width="5" height="9" fill="#6bb5f2"/><circle cx="26" cy="27" r="14.500" fill="none" stroke="#8a6230" stroke-width="2"/><circle cx="26" cy="22.500" r="5.500" fill="#8a6230"/><path d="M15,37 C17,30 35,30 37,37 C33,42 19,42 15,37Z" fill="#8a6230"/></svg>
<svg class="abs" style="left:357.2px;top:7px" width="27" height="27" viewBox="0 0 54 54"><rect x="0" y="0" width="54" height="54" rx="12" fill="#fdfdfd" /><circle cx="11" cy="14" r="3.800" fill="#2d8cf7"/><path d="M19,14 H46" stroke="#d9d9d9" stroke-width="1.600"/><circle cx="11" cy="27" r="3.800" fill="#f5453d"/><path d="M19,27 H46" stroke="#d9d9d9" stroke-width="1.600"/><circle cx="11" cy="40" r="3.800" fill="#f7a11b"/><path d="M19,40 H46" stroke="#d9d9d9" stroke-width="1.600"/></svg>
<svg class="abs" style="left:392.2px;top:7px" width="27" height="27" viewBox="0 0 54 54"><clipPath id="nc"><rect width="54" height="54" rx="12"/></clipPath><g clip-path="url(#nc)"><rect width="54" height="54" fill="#fbfbf9"/><rect width="54" height="16" fill="#fdd22f"/><path d="M0,27 H54 M0,37 H54 M0,47 H54" stroke="#dcdcd8" stroke-width="1.300"/></g></svg>
<svg class="abs" style="left:427.2px;top:7px" width="27" height="27" viewBox="0 0 54 54"><rect x="0" y="0" width="54" height="54" rx="12" fill="#1b1b1d" /><path d="M16.500,22 C18.500,19.500 21,21 21,21 C21,21 18.800,22.200 18.900,24.800 C19,27.600 21.500,28.500 21.500,28.500 C21.500,28.500 20,33 17.500,33 C16.300,33 15.800,32.300 14.500,32.300 C13.200,32.300 12.500,33 11.500,33 C9.500,33 7,29 7,25.500 C7,22 9.500,20.500 11.500,20.500 C12.800,20.500 13.800,21.300 14.500,21.300 C15.200,21.300 15.600,21.200 16.500,22Z M14.300,20 C14.300,17.800 16,16.300 17.800,16.200 C18,18.500 16,20.200 14.300,20Z" fill="#fff"/><text x="35" y="33" text-anchor="middle" font-family="Liberation Sans,sans-serif" font-size="19" font-weight="bold" fill="#fff">tv</text></svg>
<svg class="abs" style="left:462.2px;top:7px" width="27" height="27" viewBox="0 0 54 54"><defs><linearGradient id="gmu" x1="0" y1="0" x2="0" y2="1"><stop offset="0" stop-color="#fc5f78"/><stop offset="1" stop-color="#f9243c"/></linearGradient></defs><rect x="0" y="0" width="54" height="54" rx="12" fill="url(#gmu)" /><path d="M21,14.500 L40,10.500 V34 A5.500,4.500 0 1 1 36.800,30 V18.500 L24.200,21.200 V38 A5.500,4.500 0 1 1 21,34Z" fill="#fff"/></svg>
<svg class="abs" style="left:497.2px;top:7px" width="27" height="27" viewBox="0 0 54 54"><defs><linearGradient id="gpc" x1="0" y1="0" x2="0" y2="1"><stop offset="0" stop-color="#c873f2"/><stop offset="1" stop-color="#8730c8"/></linearGradient></defs><rect x="0" y="0" width="54" height="54" rx="12" fill="url(#gpc)" /><circle cx="27" cy="25" r="15" fill="none" stroke="#fff" stroke-width="3"/><circle cx="27" cy="25" r="8.500" fill="none" stroke="#fff" stroke-width="2.800"/><rect x="14" y="35" width="26" height="12" fill="url(#gpc)"/><circle cx="27" cy="24.500" r="4" fill="#fff"/><path d="M23.500,32 Q27,29.500 30.500,32 L29,44 Q27,45.500 25,44Z" fill="#fff"/></svg>
<svg class="abs" style="left:532.2px;top:7px" width="27" height="27" viewBox="0 0 54 54"><defs><linearGradient id="gas" x1="0" y1="0" x2="0" y2="1"><stop offset="0" stop-color="#1fb9fb"/><stop offset="1" stop-color="#1a6cef"/></linearGradient></defs><rect x="0" y="0" width="54" height="54" rx="12" fill="url(#gas)" /><path d="M19,36 L29.500,16 M35,36 L24.800,17.500 M11,34.500 H27 M33,34.500 H43 M15.500,40 L14,42.500 M38.500,40 L40,42.500" stroke="#fff" stroke-width="3.600" stroke-linecap="round" fill="none"/></svg>
<svg class="abs" style="left:567.2px;top:7px" width="27" height="27" viewBox="0 0 54 54"><defs><linearGradient id="gsp" x1="0" y1="0" x2="0" y2="1"><stop offset="0" stop-color="#d4d4d8"/><stop offset="1" stop-color="#8f8f94"/></linearGradient></defs><rect x="0" y="0" width="54" height="54" rx="12" fill="url(#gsp)" /><circle cx="27" cy="27" r="21.500" fill="#47474b"/><circle cx="27" cy="27" r="17.500" fill="#9a9a9f"/><rect x="25" y="5.500" width="4" height="6" fill="#3c3c40" transform="rotate(0 27 27)"/><rect x="25" y="5.500" width="4" height="6" fill="#3c3c40" transform="rotate(15 27 27)"/><rect x="25" y="5.500" width="4" height="6" fill="#3c3c40" transform="rotate(30 27 27)"/><rect x="25" y="5.500" width="4" height="6" fill="#3c3c40" transform="rotate(45 27 27)"/><rect x="25" y="5.500" width="4" height="6" fill="#3c3c40" transform="rotate(60 27 27)"/><rect x="25" y="5.500" width="4" height="6" fill="#3c3c40" transform="rotate(75 27 27)"/><rect x="25" y="5.500" width="4" height="6" fill="#3c3c40" transform="rotate(90 27 27)"/><rect x="25" y="5.500" width="4" height="6" fill="#3c3c40" transform="rotate(105 27 27)"/><rect x="25" y="5.500" width="4" height="6" fill="#3c3c40" transform="rotate(120 27 27)"/><rect x="25" y="5.500" width="4" height="6" fill="#3c3c40" transform="rotate(135 27 27)"/><rect x="25" y="5.500" width="4" height="6" fill="#3c3c40" transform="rotate(150 27 27)"/><rect x="25" y="5.500" width="4" height="6" fill="#3c3c40" transform="rotate(165 27 27)"/><rect x="25" y="5.500" width="4" height="6" fill="#3c3c40" transform="rotate(180 27 27)"/><rect x="25" y="5.500" width="4" height="6" fill="#3c3c40" transform="rotate(195 27 27)"/><rect x="25" y="5.500" width="4" height="6" fill="#3c3c40" transform="rotate(210 27 27)"/><rect x="25" y="5.500" width="4" height="6" fill="#3c3c40" transform="rotate(225 27 27)"/><rect x="25" y="5.500" width="4" height="6" fill="#3c3c40" transform="rotate(240 27 27)"/><rect x="25" y="5.500" width="4" height="6" fill="#3c3c40" transform="rotate(255 27 27)"/><rect x="25" y="5.500" width="4" height="6" fill="#3c3c40" transform="rotate(270 27 27)"/><rect x="25" y="5.500" width="4" height="6" fill="#3c3c40" transform="rotate(285 27 27)"/><rect x="25" y="5.500" width="4" height="6" fill="#3c3c40" transform="rotate(300 27 27)"/><rect x="25" y="5.500" width="4" height="6" fill="#3c3c40" transform="rotate(315 27 27)"/><rect x="25" y="5.500" width="4" height="6" fill="#3c3c40" transform="rotate(330 27 27)"/><rect x="25" y="5.500" width="4" height="6" fill="#3c3c40" transform="rotate(345 27 27)"/><circle cx="27" cy="27" r="13.500" fill="#c9c9cd"/><circle cx="27" cy="27" r="12" fill="#55555a"/><path d="M27,27 V15.500 M27,27 L17,33 M27,27 L37,33" stroke="#c9c9cd" stroke-width="2.200"/><circle cx="27" cy="27" r="3.500" fill="#c9c9cd"/></svg>
<svg class="abs" style="left:602.2px;top:7px" width="27" height="27" viewBox="0 0 54 54"><rect x="0" y="0" width="54" height="54" rx="12" fill="#1b95f2" /><circle cx="27" cy="27" r="21" fill="#fff"/><path d="M8.500,27 L19,19.500 V24.200 H35 V19.500 L45.500,27 L35,34.500 V29.800 H19 V34.500Z" fill="#2196f3"/></svg>
<svg class="abs" style="left:637.2px;top:7px" width="27" height="27" viewBox="0 0 54 54"><rect x="0" y="0" width="54" height="54" rx="12" fill="#fbfbfb" /><circle cx="27" cy="1" r="3.500" fill="none" stroke="#8d8d92" stroke-width="1.600"/><path d="M26,5 C14,16 7,30 11,45 M28,5 C40,16 47,30 43,45" fill="none" stroke="#a3a6ac" stroke-width="2.600"/><path d="M30,24 H44 M33,22 V26 M37,22 V26 M41,22 V26" stroke="#8a8a8e" stroke-width="1"/><rect x="15" y="33" width="24" height="13" rx="1.200" fill="#232325"/><rect x="17.5" y="45" width="2" height="6" fill="#555"/><rect x="21.9" y="45" width="2" height="6" fill="#555"/><rect x="26.3" y="45" width="2" height="6" fill="#555"/><rect x="30.700000000000003" y="45" width="2" height="6" fill="#555"/><rect x="35.1" y="45" width="2" height="6" fill="#555"/></svg>
<svg class="abs" style="left:691.0px;top:7.5px" width="21.5" height="27.5" viewBox="0 0 43 55"><path d="M0,0 H30 L43,13 V55 H0Z" fill="#fdfdfd"/><path d="M30,0 L43,13 H30Z" fill="#cfcfd4"/><path d="M11,20 H33 L35,42 H9Z" fill="#9aa5ad"/><rect x="14" y="22" width="16" height="4" fill="#555a60"/><rect x="9" y="42" width="26" height="5" rx="1" fill="#44484d"/><ellipse cx="22" cy="34" rx="6" ry="4" fill="none" stroke="#7f8a92" stroke-width="1"/></svg>
<svg class="abs" style="left:720.5px;top:10.5px" width="32" height="26" viewBox="0 0 64 52"><rect x="0" y="1" width="63" height="38" fill="#f4f6fa"/><rect x="0" y="1" width="63" height="3" fill="#8fb6e8"/><rect x="0" y="4" width="18" height="35" fill="#e6e9f0"/><path d="M3,9 H14 M3,13 H12 M3,17 H14 M22,9 H34 M22,13 H32 M22,17 H30 M40,9 H52 M40,13 H48 M22,24 H34 M22,28 H30" stroke="#c0c6d2" stroke-width="1.200"/><rect x="0" y="36" width="63" height="3" fill="#bcd3ef"/><rect x="41" y="28" width="22" height="22" rx="5" fill="#1b95f2"/><circle cx="52" cy="39" r="8.300" fill="#fff"/><path d="M44.800,39 L49.300,35.800 V37.800 H54.700 V35.800 L59.200,39 L54.700,42.200 V40.200 H49.300 V42.200Z" fill="#0e6ddc"/></svg>
<svg class="abs" style="left:759.0px;top:5.5px" width="25" height="30" viewBox="0 0 50 60"><defs><linearGradient id="tr1" x1="0" y1="0" x2="1" y2="0"><stop offset="0" stop-color="#e4e0ec"/><stop offset=".5" stop-color="#f7f6fa"/><stop offset="1" stop-color="#dcd8e6"/></linearGradient></defs><path d="M2,5 H48 L44,54 Q43.500,59 38,59 H12 Q6.500,59 6,54Z" fill="url(#tr1)" opacity=".95"/><ellipse cx="25" cy="5.500" rx="23" ry="4" fill="#f4f2f8"/><ellipse cx="25" cy="6" rx="20" ry="2.600" fill="#e2deea"/></svg>
<div class="abs" style="left:676.2px;top:6px;width:1px;height:32px;background:rgba(110,40,150,.55)"></div>
<div class="abs" style="left:18.3px;top:38.2px;width:3.500px;height:3.500px;border-radius:1.200px;background:#1d1650"></div>
<div class="abs" style="left:578.3px;top:38.2px;width:3.500px;height:3.500px;border-radius:1.200px;background:#4a2585"></div>
<div class="abs" style="left:613.3px;top:38.2px;width:3.500px;height:3.500px;border-radius:1.200px;background:#4a2585"></div>
<div class="abs" style="left:648.3px;top:38.2px;width:3.500px;height:3.500px;border-radius:1.200px;background:#4a2585"></div>
</div>
</div>
</body></html>
